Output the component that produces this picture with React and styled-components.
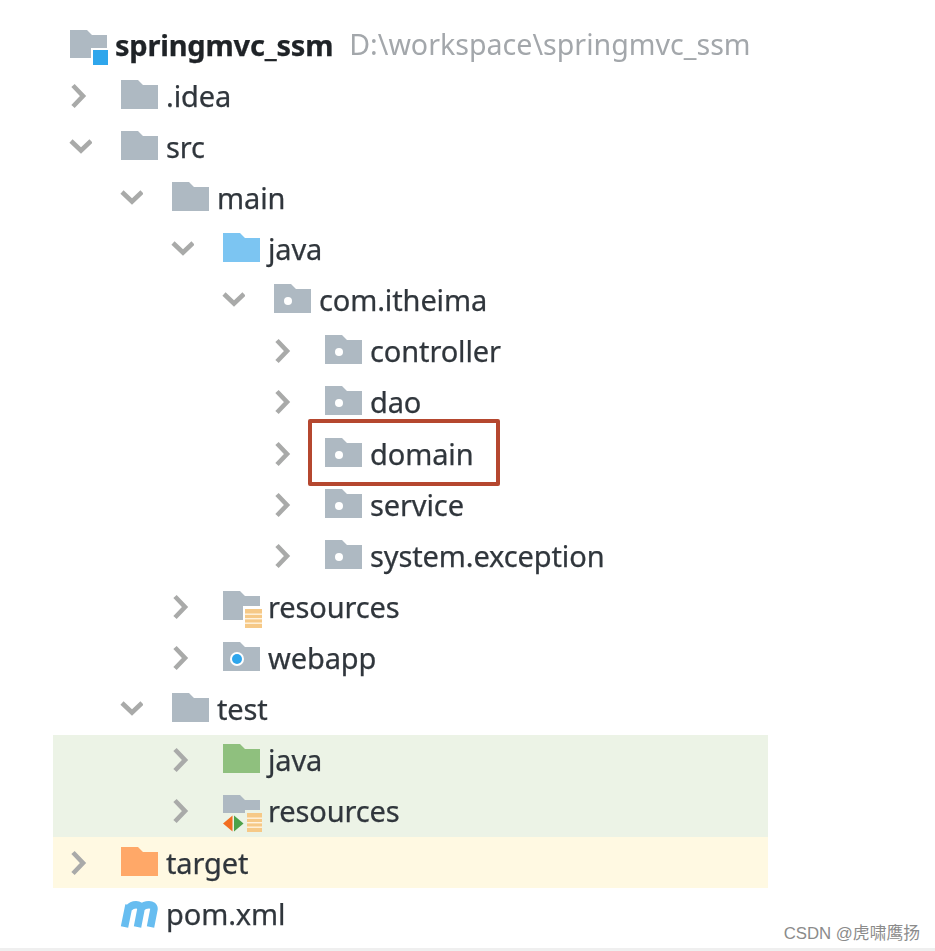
import React from "react";
import styled, { createGlobalStyle } from "styled-components";

const Global = createGlobalStyle`
  html, body { margin: 0; padding: 0; background: #fff; }
`;

const Page = styled.div`
  position: relative;
  width: 935px;
  height: 951px;
  overflow: hidden;
  background: #fff;
  font-family: "Noto Sans", "Open Sans", sans-serif;
`;

const Tree = styled.ul`
  list-style: none;
  margin: 0 0 0 53px;
  padding: 19px 0 0;
  width: 715px;
  filter: blur(0.7px);
`;

const bands = { test: "#ecf3e6", excluded: "#fff9e2", none: "transparent" };

const Row = styled.li`
  position: relative;
  display: flex;
  align-items: center;
  height: 51.13px;
  padding-left: ${(p) => (p.$root ? 17 : 13 + p.$depth * 51)}px;
  background: ${(p) => bands[p.$band || "none"]};
`;

const Twisty = styled.span`
  flex: none;
  width: 55px;
  display: flex;
  align-items: center;
`;

const IconSlot = styled.span`
  flex: none;
  width: 38px;
  height: 38px;
  display: flex;
  margin-right: 7px;
  svg { display: block; overflow: visible; }
`;

const Label = styled.span`
  font-size: 29px;
  line-height: 1;
  padding-bottom: 1px;
  white-space: nowrap;
  -webkit-text-stroke: 0.25px currentColor;
  font-weight: ${(p) => (p.$root ? 700 : 400)};
  letter-spacing: ${(p) => (p.$root ? "-0.2px" : "-0.12px")};
  color: ${(p) => (p.$root ? "#1f2327" : "#30363c")};
`;

const Path = styled.span`
  margin-left: 16px;
  font-size: 28.6px;
  line-height: 1;
  color: #a3a7ab;
  white-space: nowrap;
`;

const Highlight = styled.span`
  position: absolute;
  left: 255px;
  top: -9px;
  width: 192px;
  height: 67px;
  box-sizing: border-box;
  border: 4.5px solid #b5472f;
  border-radius: 2px;
`;

const Watermark = styled.div`
  position: absolute;
  right: 15px;
  bottom: 7px;
  font-family: "Liberation Sans", "Noto Sans CJK SC", sans-serif;
  font-size: 16.8px;
  line-height: 20px;
  color: #8b8b8b;
  white-space: nowrap;
`;

const BottomBar = styled.div`
  position: absolute;
  left: 0;
  right: 0;
  bottom: 0;
  height: 3px;
  background: #efefef;
`;

const FOLDER = "M0 3h17l5 5h15v24H0z";
const ROOT_FOLDER = "M0 4h17l5 5h15v23H0z";
const C = { gray: "#aeb9c2", blue: "#7cc5f2", green: "#8fc07e", orange: "#ffa868" };

const Chevron = ({ open }) => (
  <svg width="26" height="26" viewBox="0 0 26 26" fill="none" stroke="#a9aaa9" strokeWidth="4.6">
    {open ? <path d="M5 7l10 9.5L25 7" /> : <path d="M7 2.5l10 10.5L7 23.5" />}
  </svg>
);

const Lines = ({ x, y, w, bg }) => (
  <g>
    <rect x={x - 2} y={y - 3} width={w + 3} height="22" fill={bg} />
    <rect x={x} y={y} width={w} height="19" fill="#f6c987" />
    {[4.5, 9, 13.5].map((d) => (
      <rect key={d} x={x} y={y + d} width={w} height="1.4" fill="#fff3df" />
    ))}
  </g>
);

const Icon = ({ kind }) => {
  const common = { width: 38, height: 38, viewBox: "0 0 38 38" };
  switch (kind) {
    case "root":
      return (
        <svg {...common}>
          <path d={ROOT_FOLDER} fill={C.gray} />
          <rect x="21" y="22" width="18" height="18" fill="#fff" />
          <rect x="23" y="24" width="15" height="15" fill="#2ea6ec" />
        </svg>
      );
    case "pkg":
      return (
        <svg {...common}>
          <path d={FOLDER} fill={C.gray} />
          <circle cx="14" cy="20" r="4" fill="#fff" />
        </svg>
      );
    case "web":
      return (
        <svg {...common}>
          <path d={FOLDER} fill={C.gray} />
          <circle cx="14" cy="20" r="7" fill="#fff" />
          <circle cx="14" cy="20" r="5" fill="#2ea6ec" />
        </svg>
      );
    case "res":
      return (
        <svg {...common}>
          <path d={FOLDER} fill={C.gray} />
          <Lines x={22} y={21} w={17} bg="#fff" />
        </svg>
      );
    case "testres":
      return (
        <svg {...common}>
          <path d={FOLDER} fill={C.gray} />
          <rect x="-1" y="21" width="24" height="19" fill="#ecf3e6" />
          <path d="M9.5 23.5v16L0 31.5z" fill="#f26d21" />
          <path d="M11 23.5v16l9.5-8z" fill="#4ea24a" />
          <Lines x={24} y={21} w={15} bg="#ecf3e6" />
        </svg>
      );
    case "m":
      return (
        <svg {...common}>
          <path
            d="M3.5 32L8 10M8 13C11 9 20 8 20 14L16.5 32M20 13C24 9 33 8 33 14L29.5 32"
            fill="none"
            stroke="#67bdf0"
            strokeWidth="7.5"
            strokeLinejoin="round"
          />
        </svg>
      );
    default:
      return (
        <svg {...common}>
          <path d={FOLDER} fill={C[kind]} />
        </svg>
      );
  }
};

const rows = [
  { d: 0, t: "closed", k: "gray", l: ".idea" },
  { d: 0, t: "open", k: "gray", l: "src" },
  { d: 1, t: "open", k: "gray", l: "main" },
  { d: 2, t: "open", k: "blue", l: "java" },
  { d: 3, t: "open", k: "pkg", l: "com.itheima" },
  { d: 4, t: "closed", k: "pkg", l: "controller" },
  { d: 4, t: "closed", k: "pkg", l: "dao" },
  { d: 4, t: "closed", k: "pkg", l: "domain", h: true },
  { d: 4, t: "closed", k: "pkg", l: "service" },
  { d: 4, t: "closed", k: "pkg", l: "system.exception" },
  { d: 2, t: "closed", k: "res", l: "resources" },
  { d: 2, t: "closed", k: "web", l: "webapp" },
  { d: 1, t: "open", k: "gray", l: "test" },
  { d: 2, t: "closed", k: "green", l: "java", b: "test" },
  { d: 2, t: "closed", k: "testres", l: "resources", b: "test" },
  { d: 0, t: "closed", k: "orange", l: "target", b: "excluded" },
  { d: 0, k: "m", l: "pom.xml" },
];

export default function App() {
  return (
    <Page>
      <Global />
      <Tree>
        <Row $root>
          <IconSlot><Icon kind="root" /></IconSlot>
          <Label $root>springmvc_ssm</Label>
          <Path>D:\workspace\springmvc_ssm</Path>
        </Row>
        {rows.map((r, i) => (
          <Row key={i} $depth={r.d} $band={r.b}>
            <Twisty>{r.t && <Chevron open={r.t === "open"} />}</Twisty>
            <IconSlot><Icon kind={r.k} /></IconSlot>
            <Label>{r.l}</Label>
            {r.h && <Highlight />}
          </Row>
        ))}
      </Tree>
      <Watermark>CSDN @虎啸鹰扬</Watermark>
      <BottomBar />
    </Page>
  );
}
